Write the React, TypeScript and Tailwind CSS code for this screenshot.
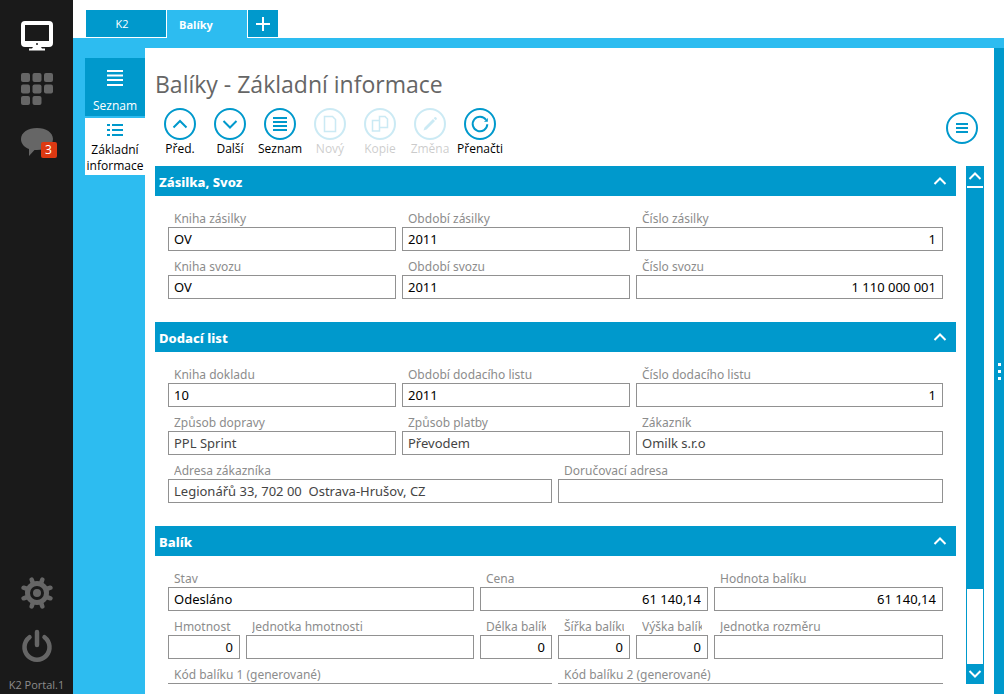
// src/App.tsx
import React, { useState } from "react";

interface FieldProps {
  id: string;
  label: string;
  value?: string;
  span: string;
  right?: boolean;
  muted?: boolean;
}

const Field: React.FC<FieldProps> = ({ id, label, value = "", span, right, muted }) => (
  <div className={`flex flex-col min-w-0 font-['Noto_Sans',sans-serif] ${span}`}>
    <label
      htmlFor={id}
      className="mx-1.5 h-[18px] leading-5 text-xs text-[#8c8c8c] whitespace-nowrap overflow-hidden"
    >
      {label}
    </label>
    <input
      id={id}
      type="text"
      defaultValue={value}
      className={`w-full h-6 pl-[5px] pr-1.5 border border-[#919191] bg-white text-[13px] outline-none ${
        right ? "text-right" : ""
      } ${muted ? "text-[#444444]" : "text-black"}`}
    />
  </div>
);

const Chevron: React.FC<{ down?: boolean }> = ({ down }) => (
  <svg width="14" height="10" viewBox="0 0 14 10" fill="none" stroke="currentColor" strokeWidth="2">
    <path d={down ? "M1.5 2 7 7.5 12.5 2" : "M1.5 8 7 2.5 12.5 8"} />
  </svg>
);

const Section: React.FC<{ title: string; children: React.ReactNode }> = ({ title, children }) => {
  const [open, setOpen] = useState(true);
  return (
    <section>
      <button
        type="button"
        aria-expanded={open}
        onClick={() => setOpen(!open)}
        className="flex items-center justify-between w-full h-[30px] pl-1 pr-[9px] bg-[#0099cc] text-white text-[13px] font-extrabold font-['Noto_Sans',sans-serif]"
      >
        <span className="pt-[3px]">{title}</span>
        <Chevron down={!open} />
      </button>
      {open && (
        <div className="grid grid-cols-[repeat(9,minmax(0,72fr))_minmax(0,73fr)] gap-1.5 px-[13px] pt-[13px] pb-[23px]">
          {children}
        </div>
      )}
    </section>
  );
};

interface ToolProps {
  label: string;
  disabled?: boolean;
  children: React.ReactNode;
}

const Tool: React.FC<ToolProps> = ({ label, disabled, children }) => (
  <button
    type="button"
    disabled={disabled}
    className={`flex flex-col items-center w-[50px] text-[#0099cc] ${disabled ? "opacity-20" : ""}`}
  >
    <svg width="32" height="32" viewBox="0 0 32 32" fill="none" stroke="currentColor" strokeWidth="2">
      <circle cx="16" cy="16" r="15" />
      {children}
    </svg>
    <span className="text-xs leading-[18px] text-black whitespace-nowrap">{label}</span>
  </button>
);

const App: React.FC = () => {
  return (
    <div className="flex h-screen overflow-hidden bg-white font-['Open_Sans',sans-serif]">
      {/* Sidebar */}
      <aside className="flex flex-col items-center shrink-0 w-[73px] pt-5 bg-[#1a1a1a] text-[#666666]">
        <button type="button" aria-label="Plocha" className="text-white">
          <svg width="32" height="32" viewBox="0 0 32 32" fill="currentColor">
            <path
              fillRule="evenodd"
              d="M4 1h24a4 4 0 0 1 4 4v18a4 4 0 0 1-4 4H20l1 1.500H24v2H8v-2h3l1-1.500H4a4 4 0 0 1-4-4V5a4 4 0 0 1 4-4ZM4 5v16h24V5Z"
            />
            <circle cx="16" cy="24" r="1" fill="#1a1a1a" />
          </svg>
        </button>
        <button type="button" aria-label="Aplikace" className="mt-[21px]">
          <svg width="32" height="32" viewBox="0 0 32 32" fill="currentColor">
            <rect x="0" y="0" width="9" height="9" rx="2" />
            <rect x="11.500" y="0" width="9" height="9" rx="2" />
            <rect x="23" y="0" width="9" height="9" rx="2" />
            <rect x="0" y="11.500" width="9" height="9" rx="2" />
            <rect x="11.500" y="11.500" width="9" height="9" rx="2" />
            <rect x="23" y="11.500" width="9" height="9" rx="2" />
            <rect x="0" y="23" width="9" height="9" rx="2" />
            <rect x="11.500" y="23" width="9" height="9" rx="2" />
          </svg>
        </button>
        <button type="button" aria-label="Zprávy" className="relative mt-[23px]">
          <svg width="32" height="28" viewBox="0 0 32 28" fill="currentColor">
            <path d="M16 0c9 0 16 4.500 16 11s-7 11-16 11h-2.500L8 28v-7C3 19 0 15.500 0 11 0 4.500 7 0 16 0Z" />
          </svg>
          <span className="absolute -right-1 -bottom-0.5 w-4 h-4 rounded-xs bg-[#dc3912] text-white text-xs leading-4 text-center">
            3
          </span>
        </button>
        <button type="button" aria-label="Nastavení" className="mt-auto">
          <svg width="32" height="32" viewBox="0 0 32 32" fill="none" stroke="currentColor">
            <circle cx="16" cy="16" r="9.500" strokeWidth="5" />
            <circle cx="16" cy="16" r="4" fill="currentColor" stroke="none" />
            <path
              strokeWidth="4.500"
              strokeLinecap="round"
              d="M20.500 5 21.300 2.600M11.500 5 10.700 2.600M20.500 27l.8 2.400M11.500 27l-.8 2.400M27 11.500l2.400-.8M27 20.500l2.400.8M5 11.500l-2.400-.8M5 20.500l-2.400.8"
            />
          </svg>
        </button>
        <button type="button" aria-label="Odhlásit" className="mt-[19px]">
          <svg
            width="32"
            height="34"
            viewBox="0 0 32 34"
            fill="none"
            stroke="currentColor"
            strokeWidth="4.500"
            strokeLinecap="round"
          >
            <path d="M16 4v13M8.500 9.200a12.500 12.500 0 1 0 15 0" />
          </svg>
        </button>
        <span className="mt-[15px] mb-px text-[11px] leading-4 text-[#8c8c8c]">K2 Portal.1</span>
      </aside>

      <div className="flex flex-col flex-1 min-w-0 bg-[#2dbcf0]">
        {/* Tabs */}
        <nav className="flex shrink-0 h-[38px] pt-2.5 pl-[13px] bg-white text-white text-[11px]">
          <button type="button" className="w-20 h-[27px] mr-px pt-0.5 pr-2 bg-[#0099cc]">
            K2
          </button>
          <button type="button" className="w-20 h-7 pt-0.5 pl-3 bg-[#2dbcf0] font-bold text-left">
            Balíky
          </button>
          <button
            type="button"
            aria-label="Nová záložka"
            className="flex items-center justify-center w-[30px] h-[27px] ml-px bg-[#0099cc]"
          >
            <svg width="14" height="14" viewBox="0 0 14 14" stroke="currentColor" strokeWidth="2">
              <path d="M7 0v14M0 7h14" />
            </svg>
          </button>
        </nav>

        <div className="flex flex-1 min-h-0 pt-2.5">
          {/* Views */}
          <nav className="flex flex-col gap-0.5 shrink-0 w-[72px] pt-2.5 pl-3 text-xs leading-4">
            <button
              type="button"
              className="flex flex-col items-center justify-between h-[58px] pt-3 pb-0.5 bg-[#0099cc] text-white"
            >
              <svg width="16" height="16" viewBox="0 0 16 16" stroke="currentColor" strokeWidth="2">
                <path d="M0 1h16M0 5.500h16M0 10h16M0 15h16" />
              </svg>
              <span>Seznam</span>
            </button>
            <button
              type="button"
              className="flex flex-col items-center justify-between h-[57px] pt-1.5 pb-px bg-white text-black"
            >
              <svg width="16" height="12" viewBox="0 0 16 12" stroke="#0099cc" strokeWidth="2">
                <path d="M0 1h3M5 1h11M0 6h3M5 6h11M0 11h3M5 11h11" />
              </svg>
              <span>
                Základní
                <br />
                informace
              </span>
            </button>
          </nav>

          <main className="flex flex-col flex-1 min-w-0 pt-5 pb-2.5 pl-2.5 bg-white">
            <h1 className="mb-2 text-[23px] leading-8 text-[#666666]">Balíky - Základní informace</h1>

            {/* Toolbar */}
            <div className="flex items-start justify-between h-[58px] shrink-0 pr-4">
              <div className="flex">
                <Tool label="Před.">
                  <path d="m9.500 19.500 6.500-6.500 6.500 6.500" />
                </Tool>
                <Tool label="Další">
                  <path d="m9.500 13 6.500 6.500 6.500-6.500" />
                </Tool>
                <Tool label="Seznam">
                  <path d="M9 10h14M9 14h14M9 18h14M9 22h14" />
                </Tool>
                <Tool label="Nový" disabled>
                  <path strokeWidth="1.500" d="M10.500 8.500h8l3 3v12h-11z" />
                </Tool>
                <Tool label="Kopie" disabled>
                  <path strokeWidth="1.500" d="M15.500 8.500h5.500l2.500 2.500v8.500h-8zM15.500 12.500h-7v10.500h7v-3.500" />
                </Tool>
                <Tool label="Změna" disabled>
                  <path
                    fill="currentColor"
                    stroke="none"
                    d="m10.500 19.500 8.500-8.500 2 2-8.500 8.500-3 1zM19.700 10.300l1-1q.6-.4 1.200 0l.8.800q.4.600 0 1.200l-1 1z"
                  />
                </Tool>
                <Tool label="Přenačti">
                  <path d="M22 11.800a7.300 7.300 0 1 0 1.300 4.500" />
                  <path fill="currentColor" stroke="none" d="M23.800 10v3.800H20z" />
                </Tool>
              </div>
              <button type="button" aria-label="Menu" className="mt-1 text-[#0099cc]">
                <svg width="32" height="32" viewBox="0 0 32 32" fill="none" stroke="currentColor" strokeWidth="2">
                  <circle cx="16" cy="16" r="15" />
                  <path d="M10 12h12M10 16h12M10 20h12" />
                </svg>
              </button>
            </div>

            <div className="flex flex-1 min-h-0 gap-2.5 pr-2.5">
              <form className="flex-1 min-w-0 overflow-hidden">
                <Section title="Zásilka, Svoz">
                  <Field id="kniha-zasilky" label="Kniha zásilky" value="OV" span="col-span-3" />
                  <Field id="obdobi-zasilky" label="Období zásilky" value="2011" span="col-span-3" />
                  <Field id="cislo-zasilky" label="Číslo zásilky" value="1" span="col-span-4" right />
                  <Field id="kniha-svozu" label="Kniha svozu" value="OV" span="col-span-3" />
                  <Field id="obdobi-svozu" label="Období svozu" value="2011" span="col-span-3" />
                  <Field id="cislo-svozu" label="Číslo svozu" value="1 110 000 001" span="col-span-4" right />
                </Section>

                <Section title="Dodací list">
                  <Field id="kniha-dokladu" label="Kniha dokladu" value="10" span="col-span-3" />
                  <Field id="obdobi-dl" label="Období dodacího listu" value="2011" span="col-span-3" />
                  <Field id="cislo-dl" label="Číslo dodacího listu" value="1" span="col-span-4" right />
                  <Field id="doprava" label="Způsob dopravy" value="PPL Sprint" span="col-span-3" muted />
                  <Field id="platba" label="Způsob platby" value="Převodem" span="col-span-3" muted />
                  <Field id="zakaznik" label="Zákazník" value="Omilk s.r.o" span="col-span-4" muted />
                  <Field
                    id="adresa"
                    label="Adresa zákazníka"
                    value="Legionářů 33, 702 00  Ostrava-Hrušov, CZ"
                    span="col-span-5"
                    muted
                  />
                  <Field id="dorucovaci" label="Doručovací adresa" span="col-span-5" muted />
                </Section>

                <Section title="Balík">
                  <Field id="stav" label="Stav" value="Odesláno" span="col-span-4" />
                  <Field id="cena" label="Cena" value="61 140,14" span="col-span-3" right />
                  <Field id="hodnota" label="Hodnota balíku" value="61 140,14" span="col-span-3" right />
                  <Field id="hmotnost" label="Hmotnost" value="0" span="col-span-1" right />
                  <Field id="jednotka-hm" label="Jednotka hmotnosti" span="col-span-3" />
                  <Field id="delka" label="Délka balíku" value="0" span="col-span-1" right />
                  <Field id="sirka" label="Šířka balíku" value="0" span="col-span-1" right />
                  <Field id="vyska" label="Výška balíku" value="0" span="col-span-1" right />
                  <Field id="jednotka-roz" label="Jednotka rozměru" span="col-span-3" />
                  <Field id="kod1" label="Kód balíku 1 (generované)" span="col-span-5" />
                  <Field id="kod2" label="Kód balíku 2 (generované)" span="col-span-5" />
                </Section>
              </form>

              {/* Scrollbar */}
              <div className="flex flex-col shrink-0 w-[18px] px-px bg-[#0099cc] text-white">
                <button type="button" aria-label="Nahoru" className="flex items-center justify-center h-5">
                  <Chevron />
                </button>
                <div className="h-0.5 bg-white" />
                <div className="flex-1" />
                <div className="h-[75px] bg-white" />
                <button type="button" aria-label="Dolů" className="flex items-center justify-center h-5">
                  <Chevron down />
                </button>
              </div>
            </div>
          </main>

          {/* Right panel handle */}
          <div className="flex flex-col items-center justify-center gap-1 shrink-0 w-2.5 bg-[#0099cc]">
            <span className="w-[3px] h-[3px] bg-white" />
            <span className="w-[3px] h-[3px] bg-white" />
            <span className="w-[3px] h-[3px] bg-white" />
          </div>
        </div>
      </div>
    </div>
  );
};

export default App;
